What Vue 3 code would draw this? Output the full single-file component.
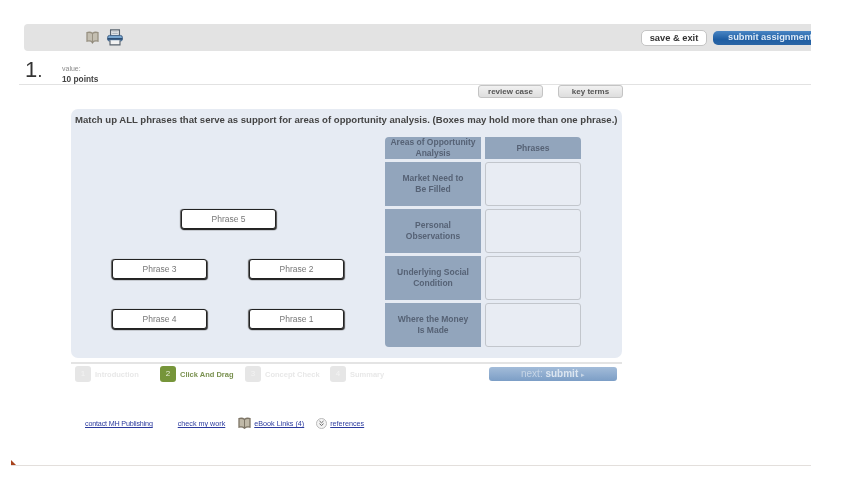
<script setup>
const rows = [
  ['Market Need to', 'Be Filled'],
  ['Personal', 'Observations'],
  ['Underlying Social', 'Condition'],
  ['Where the Money', 'Is Made'],
]
const phrases = [
  { name: 'Phrase 5', x: 110, y: 100 },
  { name: 'Phrase 3', x: 41, y: 150 },
  { name: 'Phrase 2', x: 178, y: 150 },
  { name: 'Phrase 4', x: 41, y: 200 },
  { name: 'Phrase 1', x: 178, y: 200 },
]
const steps = [
  { n: 1, label: 'Introduction', w: 85 },
  { n: 2, label: 'Click And Drag', w: 85, active: true },
  { n: 3, label: 'Concept Check', w: 85 },
  { n: 4, label: 'Summary', w: 70 },
]
</script>

<template>
  <div class="page">
    <header class="topbar">
      <svg class="book" width="13" height="13" viewBox="0 0 13 13">
        <path d="M6.5 2.5C5 1.2 3 1 1 1.6v8.6c2-.5 4-.3 5.5 1 1.5-1.3 3.5-1.5 5.5-1V1.6C10 1 8 1.2 6.5 2.5z" fill="#c4bfb2" stroke="#989182" stroke-width="1.3"/>
        <path d="M6.5 2.5v8.7" stroke="#989182" stroke-width="1"/>
        <path d="M5.3 11.6h2.4L6.5 12.8z" fill="#77705f"/>
      </svg>
      <svg class="printer" width="16" height="17" viewBox="0 0 17 18">
        <path d="M3.8 7V1h9.4v6" fill="#f2f2f2" stroke="#59646f" stroke-width="1.3"/>
        <path d="M5.5 3h6M5.5 4.8h6" stroke="#9aa3ab" stroke-width=".8"/>
        <rect x=".7" y="6.8" width="15.6" height="6" rx="2" fill="#79a7d0" stroke="#3f5f83"/>
        <rect x=".7" y="9.6" width="15.6" height="1.8" fill="#27476d"/>
        <path d="M3.2 12v4.8h10.6V12" fill="#f2f2f2" stroke="#59646f" stroke-width="1.2"/>
      </svg>
      <button class="save">save &amp; exit</button>
      <button class="submit">submit assignment</button>
    </header>

    <section class="question-head">
      <span class="number">1<i>.</i></span>
      <div class="value">
        <span>value:</span>
        <strong>10 points</strong>
      </div>
    </section>

    <div class="tools">
      <button>review case</button>
      <button>key terms</button>
    </div>

    <main class="panel">
      <h1>Match up ALL phrases that serve as support for areas of opportunity analysis. (Boxes may hold more than one phrase.)</h1>
      <div class="phrase" v-for="p in phrases" :key="p.name" :style="{ left: p.x + 'px', top: p.y + 'px' }">{{ p.name }}</div>
      <div class="match">
        <div class="hd hd-left">Areas of Opportunity<br>Analysis</div>
        <div class="hd hd-right">Phrases</div>
        <template v-for="(r, i) in rows" :key="i">
          <div class="area" :class="{ last: i === rows.length - 1 }">{{ r[0] }}<br>{{ r[1] }}</div>
          <div class="drop"></div>
        </template>
      </div>
    </main>

    <nav class="steps">
      <div class="step" v-for="s in steps" :key="s.n" :class="{ active: s.active }" :style="{ width: s.w + 'px' }">
        <b>{{ s.n }}</b><span>{{ s.label }}</span>
      </div>
      <button class="next">next: <strong>submit</strong> <em>▸</em></button>
    </nav>

    <footer class="links">
      <a class="contact">contact MH Publishing</a>
      <a class="work">check my work</a>
      <svg width="13" height="13" viewBox="0 0 13 13" class="fbook">
        <path d="M6.5 2.5C5 1.2 3 1 1 1.6v8.6c2-.5 4-.3 5.5 1 1.5-1.3 3.5-1.5 5.5-1V1.6C10 1 8 1.2 6.5 2.5z" fill="#c0b9a8" stroke="#7d7566" stroke-width="1.3"/>
        <path d="M6.5 2.5v8.7" stroke="#7d7566"/>
      </svg>
      <a class="ebook">eBook Links (4)</a>
      <svg width="11" height="11" viewBox="0 0 11 11" class="ref">
        <circle cx="5.5" cy="5.5" r="5" fill="#f4f4f4" stroke="#b9b9b9"/>
        <path d="M3.5 3l2 1.8L7.5 3M3.5 5.7l2 1.8 2-1.8" fill="none" stroke="#666" stroke-width="1"/>
      </svg>
      <a>references</a>
    </footer>

    <div class="bottom"><span class="corner"></span></div>
  </div>
</template>

<style scoped>
.page {
  width: 811px;
  height: 491px;
  overflow: hidden;
  font-family: "Liberation Sans", Arial, sans-serif;
  color: #444;
  background: #fff;
  filter: blur(0.45px);
}
button { font-family: inherit; cursor: pointer; padding: 0; }

.topbar {
  margin: 24px 0 0 24px;
  height: 27px;
  background: #e3e3e3;
  border-radius: 4px 0 0 4px;
  display: flex;
  align-items: center;
  overflow: hidden;
}
.topbar > * { flex: none; }
.book { margin: 0 0 0 62px; }
.printer { margin: -1px 0 0 8px; }
.save {
  margin-left: 518px;
  width: 66px;
  height: 16px;
  background: #fff;
  border: 1px solid #c4c4c4;
  border-radius: 5px;
  font-size: 9.3px;
  font-weight: bold;
  color: #333;
  line-height: 14px;
}
.submit {
  margin-left: 6px;
  width: 110px;
  height: 14px;
  border: 0;
  border-radius: 5px 0 0 5px;
  background: linear-gradient(#4a86c4, #1f5ea3 60%, #2b66a6);
  color: #dce9f6;
  font-size: 9.3px;
  font-weight: bold;
  line-height: 12px;
  white-space: nowrap;
  text-align: left;
  padding: 0 0 2px 15px;
}

.question-head {
  margin-left: 19px;
  height: 33px;
  border-bottom: 1px solid #e2e2e2;
  display: flex;
  box-sizing: content-box;
}
.number {
  margin: 8px 0 0 6px;
  font-size: 22px;
  line-height: 22px;
  color: #333;
  width: 37px;
}
.number i { font-style: normal; font-weight: bold; font-size: 12px; margin-left: 1px; }
.value {
  margin-top: 13px;
  display: flex;
  flex-direction: column;
  font-size: 7px;
  color: #8a8a8a;
  line-height: 9px;
}
.value strong { font-size: 8.3px; color: #444; line-height: 11px; margin-top: 1px; }

.tools {
  margin-left: 478px;
  height: 24px;
  display: flex;
  gap: 15px;
}
.tools button {
  width: 65px;
  height: 13px;
  background: linear-gradient(#f1f1f1, #dedede);
  border: 1px solid #c4c4c4;
  border-radius: 3px;
  font-size: 8px;
  font-weight: bold;
  color: #555;
  line-height: 10px;
}

.panel {
  position: relative;
  margin-left: 71px;
  width: 551px;
  height: 249px;
  box-sizing: border-box;
  background: #e6ebf3;
  border-radius: 7px;
  padding: 5px 0 0 4px;
}
h1 {
  margin: 0;
  font-size: 9.57px;
  line-height: 12px;
  font-weight: bold;
  color: #444;
  white-space: nowrap;
}
.phrase {
  position: absolute;
  width: 95px;
  height: 20px;
  box-sizing: border-box;
  background: #fff;
  border: 1px solid #222;
  border-radius: 3px;
  box-shadow: 0 1px 1px #222, -1px 0 1px #666, 1px 1px 1px #555;
  font-size: 8.5px;
  line-height: 18px;
  text-align: center;
  color: #777;
}
.match {
  margin: 11px 0 0 310px;
  width: 196px;
  display: grid;
  grid-template-columns: 96px 96px;
  grid-template-rows: 21.5px 43.5px 43.5px 43.5px 43.5px;
  column-gap: 4px;
  row-gap: 3.5px;
}
.hd, .area {
  background: #92a5bc;
  color: #566275;
  font-weight: bold;
  text-align: center;
  display: flex;
  align-items: center;
  justify-content: center;
  font-size: 8.5px;
  line-height: 10.5px;
}
.hd-left { border-radius: 4px 0 0 0; }
.hd-right { border-radius: 0 4px 0 0; }
.area.last { border-radius: 0 0 0 4px; }
.drop {
  background: #e8ecf3;
  border: 1px solid #c2c6cc;
  border-radius: 3px;
}

.steps {
  margin: 4px 0 0 71px;
  width: 547px;
  height: 19px;
  border-top: 2px solid #e4e4e4;
  padding: 2px 0 0 4px;
  box-sizing: content-box;
  display: flex;
  align-items: flex-start;
}
.step {
  display: flex;
  align-items: center;
  height: 16px;
  font-size: 7.5px;
  font-weight: bold;
  color: #e8e8e8;
}
.step b {
  flex: none;
  width: 16px;
  height: 16px;
  margin-right: 4px;
  border-radius: 3px;
  background: #e6e6e6;
  color: #f3f3f3;
  font-size: 8px;
  font-weight: normal;
  line-height: 16px;
  text-align: center;
}
.step span { white-space: nowrap; }
.step.active { color: #7a9150; }
.step.active b { background: #76953a; color: #e8efd9; }
.next {
  margin: 1px 0 0 89px;
  width: 128px;
  height: 14px;
  border: 0;
  border-radius: 3px;
  background: linear-gradient(#a3bcd9, #7c9ec6);
  color: #c6d5e6;
  font-size: 10px;
  line-height: 12px;
}
.next strong { color: #dbe5f0; }
.next em { font-style: normal; font-size: 7px; }

.links {
  margin: 32px 0 0 85px;
  height: 13px;
  display: flex;
  align-items: center;
  font-size: 7.2px;
}
.links a { color: #2b3a9e; text-decoration: underline; white-space: nowrap; }
.contact { letter-spacing: -.18px; }
.work { margin-left: 25px; }
.fbook { margin: 0 3px 0 13px; }
.ref { margin: 0 3px 0 12px; }

.bottom {
  margin: 35px 0 0 11px;
  height: 1px;
  background: #e3dfdc;
  position: relative;
}
.corner {
  position: absolute;
  left: 0;
  bottom: 1px;
  width: 0;
  height: 0;
  border-left: 5px solid #a8431c;
  border-top: 5px solid transparent;
}
</style>

<style>
html, body { margin: 0; background: #fff; }
</style>
